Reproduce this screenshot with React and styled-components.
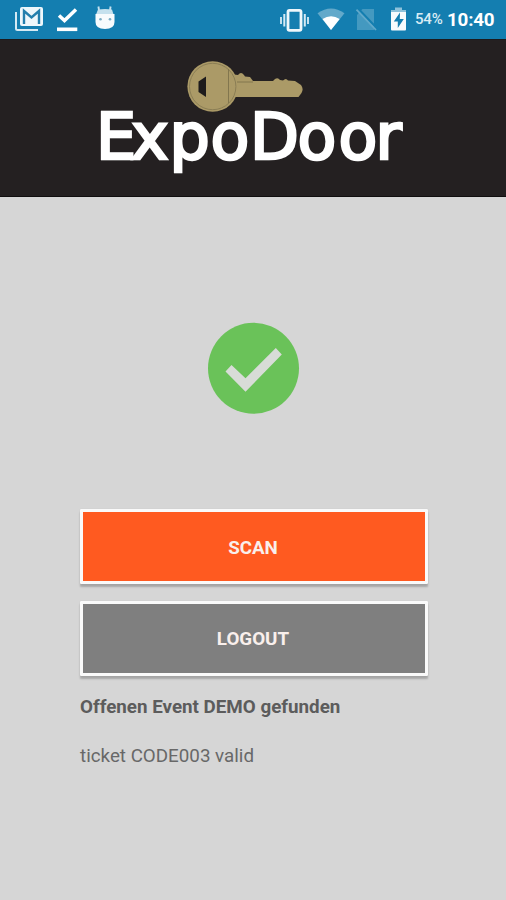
import React from 'react';
import styled, { createGlobalStyle } from 'styled-components';

const GlobalStyle = createGlobalStyle`
  * {
    box-sizing: border-box;
  }
  body {
    margin: 0;
    background: #d6d6d6;
    font-family: Roboto, 'Liberation Sans', sans-serif;
  }
`;

const Screen = styled.div`
  display: flex;
  flex-direction: column;
  height: 900px;
  width: 506px;
  overflow: hidden;
  background: #d6d6d6;
`;

const StatusBar = styled.div`
  display: flex;
  justify-content: space-between;
  height: 39px;
  padding: 0 12px 0 12px;
  background: #147eb0;
  color: #fff;
`;

const IconGroup = styled.div`
  display: flex;
  align-items: flex-start;
`;

const StatusIcon = styled.svg`
  display: block;
  flex: none;
  width: ${props => props.$width}px;
  height: 39px;
`;

const BatteryText = styled.span`
  width: 32px;
  font-size: 15px;
  font-weight: 500;
  line-height: 39px;
  letter-spacing: -0.2px;
  color: #d9ecf5;
`;

const Clock = styled.span`
  width: 47px;
  font-size: 18.8px;
  font-weight: 700;
  line-height: 41px;
  letter-spacing: -0.2px;
`;

const Header = styled.header`
  height: 158px;
  background: #242021;
  border-top: 1px solid #1c1a1c;
  border-bottom: 1px solid #100e0f;
`;

const Logo = styled.svg`
  display: block;
  width: 506px;
  height: 156px;
`;

const Content = styled.main`
  display: flex;
  flex-direction: column;
  padding: 125px 78px 0 80px;
`;

const Result = styled.svg`
  display: block;
  align-self: center;
  width: 92px;
  height: 92px;
  margin-bottom: 95px;
`;

const Button = styled.button`
  height: 75px;
  margin: 0 0 16.5px;
  padding: 2px 2px 0 0;
  border: 3px solid #fafafa;
  border-radius: 1px;
  background: ${props => props.$color};
  box-shadow: 0 3px 2px rgba(0, 0, 0, 0.22), 0 0 1px rgba(0, 0, 0, 0.15);
  color: #f9efec;
  font-family: inherit;
  font-size: 18.8px;
  font-weight: 700;
  line-height: 22px;
`;

const Messages = styled.div`
  padding-top: 2.5px;
`;

const Message = styled.p`
  margin: 0 0 25px;
  font-size: 18.8px;
  line-height: 24px;
  font-weight: ${props => (props.$bold ? 700 : 400)};
  color: ${props => (props.$bold ? '#5c5c5c' : '#686868')};
`;

const MailIcon = () => (
    <StatusIcon $width={34} viewBox="12 0 34 39">
        <path d="M16 12v16.5q0 1.5 1.5 1.5H38" fill="none" stroke="#d5eaf4" strokeWidth="2" />
        <rect x="20" y="7" width="23" height="19" rx="2" fill="#eef7fb" />
        <path d="M24 24V11l7.5 6.5L39 11v13" fill="none" stroke="#247fad" strokeWidth="2.4" />
    </StatusIcon>
);

const DoneIcon = () => (
    <StatusIcon $width={36} viewBox="46 0 36 39">
        <path d="M59 15.5l5.5 5L76 9.5" fill="none" stroke="#fff" strokeWidth="3.5" />
        <path d="M57 29.3h20.3" stroke="#fff" strokeWidth="3.6" />
    </StatusIcon>
);

const CidIcon = () => (
    <StatusIcon $width={36} viewBox="82 0 36 39">
        <path d="M99 10l-.6-3.5M110 10l.6-3.5" stroke="#c5e1ee" strokeWidth="1.9" />
        <path d="M98 9.5Q105 8.5 112 9.5l1.5 5H96z" fill="#c5e1ee" />
        <path d="M95.5 14h19v8q0 7-9.5 7t-9.5-7z" fill="#f7fbfd" />
        <circle cx="100.5" cy="19.3" r="1.3" fill="#7cadc5" />
        <circle cx="110" cy="19.3" r="1.3" fill="#7cadc5" />
    </StatusIcon>
);

const VibrateIcon = () => (
    <StatusIcon $width={34} viewBox="278 0 34 39">
        <rect x="288" y="10.3" width="13" height="20" rx="1.5" fill="none" stroke="#eef7fb" strokeWidth="2.8" />
        <path d="M284.3 14v12.5M304.8 14v12.5" stroke="#d5eaf4" strokeWidth="2" />
        <path d="M281 17v7M308 17v7" stroke="#d5eaf4" strokeWidth="1.8" />
    </StatusIcon>
);

const WifiIcon = () => (
    <StatusIcon $width={34} viewBox="312 0 34 39">
        <path d="M317.5 13.3Q331 3.5 344.5 13.3L331 30z" fill="#63a9ca" />
        <path d="M322.5 19Q331 13.5 339.7 19L331 30z" fill="#fff" />
    </StatusIcon>
);

const NoSimIcon = () => (
    <StatusIcon $width={38} viewBox="346 0 38 39">
        <path d="M362.5 9H374v21h-17V15z" fill="#4499c0" />
        <path d="M358 8.5l19 20" stroke="#147eb0" strokeWidth="2.4" />
        <path d="M356.5 9.7L376 30" stroke="#62a9ca" strokeWidth="1.8" />
    </StatusIcon>
);

const BatteryIcon = () => (
    <StatusIcon $width={31} viewBox="384 0 31 39">
        <path d="M395 7.5h7V10h4v7h-15v-7h4z" fill="#8fc2da" />
        <path d="M391 12h15v17.5q0 1-1 1h-13q-1 0-1-1z" fill="#f7fbfd" />
        <path d="M400 12.5l-6.2 9h4v6.5l6-9h-4z" fill="#147eb0" />
    </StatusIcon>
);

const Brand = () => (
    <Logo viewBox="0 40 506 156">
        <path
            d="M234 74.500l4 .5q3-4 6 0l1 1.500 5 .5 3 4h20l2-2q3-2 5 1l3 .5q3-3 5 0l7 .5 6 4q3 4 .5 8l-3 4H235z"
            fill="#ab9a67"
        />
        <circle cx="212.700" cy="86.500" r="25.300" fill="#ab9a67" />
        <circle cx="212.700" cy="86.500" r="23.200" fill="none" stroke="#877b52" strokeWidth="0.900" />
        <path d="M228.500 69v34M237 82h16" fill="none" stroke="#82764e" strokeWidth="1" />
        <path d="M206 76.500V97l-7.500-5v-10.500z" fill="#1d1b1c" />
        <text
            x="96 131 169.500 210.500 250 297.500 338.500 375.500"
            y="158.500"
            fontFamily="'DejaVu Sans', sans-serif"
            fontSize="63.500"
            fill="#fff"
            stroke="#fff"
            strokeWidth="2.700"
        >
            ExpoDoor
        </text>
    </Logo>
);

const App = () => {
    return (
        <Screen>
            <GlobalStyle />
            <StatusBar>
                <IconGroup>
                    <MailIcon />
                    <DoneIcon />
                    <CidIcon />
                </IconGroup>
                <IconGroup>
                    <VibrateIcon />
                    <WifiIcon />
                    <NoSimIcon />
                    <BatteryIcon />
                    <BatteryText>54%</BatteryText>
                    <Clock>10:40</Clock>
                </IconGroup>
            </StatusBar>
            <Header>
                <Brand />
            </Header>
            <Content>
                <Result viewBox="0.500 0 92 92">
                    <circle cx="46" cy="46.300" r="45.500" fill="#6ac259" />
                    <path d="M18 49.500l6-6.500L38 56.300 68.300 26l6 6.500L38 69.700z" fill="#d8dcd7" />
                </Result>
                <Button $color="#ff5a20">SCAN</Button>
                <Button $color="#7f7f7f">LOGOUT</Button>
                <Messages>
                    <Message $bold>Offenen Event DEMO gefunden</Message>
                    <Message>ticket CODE003 valid</Message>
                </Messages>
            </Content>
        </Screen>
    );
};

export default App;
